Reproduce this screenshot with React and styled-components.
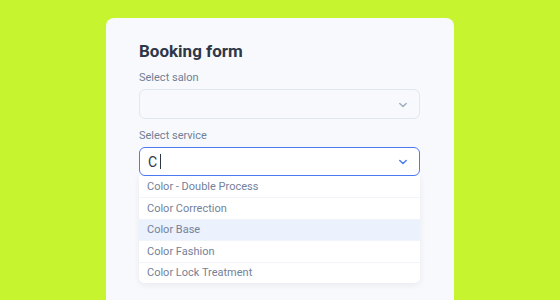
import React from "react";
import styled, { createGlobalStyle } from "styled-components";

const GlobalStyle = createGlobalStyle`
  html, body {
    margin: 0;
    padding: 0;
    background: #c6f52f;
    font-family: Roboto, "Noto Sans", sans-serif;
  }
  * { box-sizing: border-box; }
`;

const services = [
  "Color - Double Process",
  "Color Correction",
  "Color Base",
  "Color Fashion",
  "Color Lock Treatment",
];

const Chevron = ({ color }) => (
  <svg width="14" height="14" viewBox="0 0 24 24" fill="none">
    <path
      d="M6.5 9.5l5.5 5 5.5-5"
      stroke={color}
      strokeWidth="2.6"
      strokeLinecap="round"
      strokeLinejoin="round"
    />
  </svg>
);

const App = () => {
  return (
    <Page>
      <GlobalStyle />
      <Card>
        <Title>Booking form</Title>
        <Label>Select salon</Label>
        <Select>
          <Value />
          <Chevron color="#a0aec0" />
        </Select>
        <Label $second>Select service</Label>
        <Combo>
          <Select $active>
            <Value>
              C<Caret />
            </Value>
            <Chevron color="#4c7af3" />
          </Select>
          <Menu>
            {services.map((s, i) => (
              <Option key={s} $highlight={i === 2}>
                {s}
              </Option>
            ))}
          </Menu>
        </Combo>
      </Card>
    </Page>
  );
};

export default App;

const Page = styled.div`
  width: 560px;
  height: 300px;
  overflow: hidden;
  display: flex;
  justify-content: center;
  padding-top: 18px;
`;

const Card = styled.div`
  width: 348px;
  height: 320px;
  background: #f7f9fc;
  border-radius: 8px;
  padding: 22px 34px 0 33px;
  display: flex;
  flex-direction: column;
`;

const Title = styled.h1`
  margin: 0;
  font-size: 17px;
  font-weight: 700;
  color: #2d3748;
  line-height: 22px;
`;

const Label = styled.div`
  margin-top: ${(p) => (p.$second ? "10px" : "9px")};
  font-size: 11px;
  line-height: 14px;
  color: #718096;
`;

const Select = styled.div`
  margin-top: ${(p) => (p.$active ? "0" : "4px")};
  height: ${(p) => (p.$active ? "29px" : "30px")};
  display: flex;
  align-items: center;
  justify-content: space-between;
  padding: 0 9px 0 8px;
  background: ${(p) => (p.$active ? "#fff" : "#f7f9fc")};
  border: ${(p) => (p.$active ? "1.5px solid #4c7af3" : "1px solid #e2e8f0")};
  border-radius: 6px;
  svg {
    margin-top: 1px;
  }
`;

const Combo = styled.div`
  margin-top: 4px;
  display: flex;
  flex-direction: column;
`;

const Value = styled.div`
  font-size: 14px;
  color: #2d3748;
  display: flex;
  align-items: center;
`;

const Caret = styled.span`
  display: inline-block;
  width: 1px;
  height: 15px;
  background: #2d3748;
  margin-left: 3px;
`;

const Menu = styled.div`
  background: #fff;
  border-radius: 0 0 6px 6px;
  box-shadow: 0 2px 6px rgba(45, 55, 72, 0.08);
  overflow: hidden;
`;

const Option = styled.div`
  height: 21.4px;
  display: flex;
  align-items: center;
  padding-left: 8px;
  font-size: 11px;
  color: #74819a;
  background: ${(p) => (p.$highlight ? "#ebf1fd" : "#fff")};
  border-top: 1px solid #f1f4f8;
  &:first-child {
    border-top: none;
  }
`;
